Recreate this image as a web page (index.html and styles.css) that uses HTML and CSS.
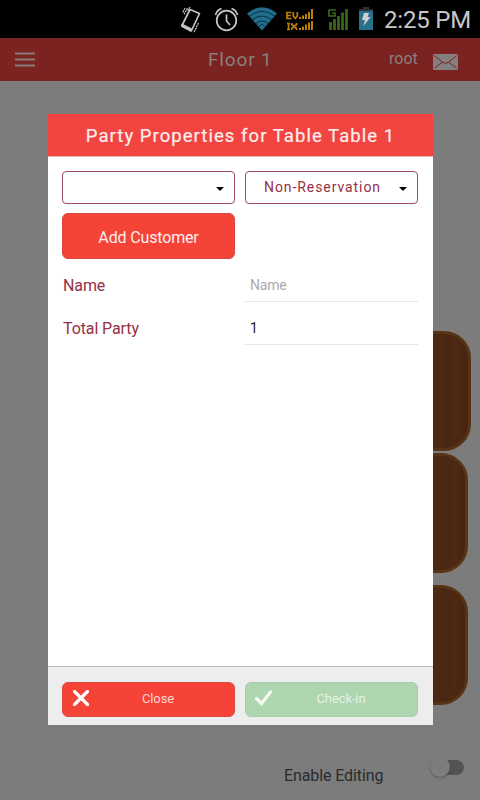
FILE: index.html
```html
<!DOCTYPE html>
<html lang="en">
<head>
<meta charset="utf-8">
<title>Floor 1</title>
<link rel="stylesheet" href="styles.css">
</head>
<body>
<div class="screen">
  <div class="status">
    <svg class="vibrate" width="22" height="26" viewBox="0 0 22 26" fill="none" stroke="#c4c4c4">
      <path d="M10 2.500 19.500 6.500 11.500 23.500 2 18.500Z" stroke-width="1.700" stroke-linejoin="round"/>
      <path d="M2 17 12 22 11 24.500 1.500 19.500Z" fill="#c4c4c4"/>
      <path d="M7.500 1 4 7.500M5 1 2.500 6M18.500 16 15 23M16.500 21 13.500 25.500M10 0 7.500 4" stroke-width="1.200" stroke-dasharray="2 .6"/>
    </svg>
    <svg class="alarm" width="25" height="25" viewBox="0 0 25 25" fill="none" stroke="#c8c8c8" stroke-width="1.700">
      <circle cx="12.500" cy="13.500" r="9.800"/>
      <path d="M12.500 7.500V14L16 18M1.500 8C2.500 4.500 4.500 2.500 7.500 1.500M23.500 8C22.500 4.500 20.500 2.500 17.500 1.500"/>
    </svg>
    <svg class="wifi" width="32" height="24" viewBox="0 0 32 24">
      <path d="M1 6.500Q16-6 31 6.500L16 23.500Z" fill="#216d8c"/>
      <path d="M3 9.500Q16-1 29 9.500M6 13Q16 5 26 13M9.500 17Q16 11 22.500 17" fill="none" stroke="#06202b" stroke-width=".8"/>
      <path d="M13.500 19.500 16 17 18.500 19.500" fill="none" stroke="#0a2b38"/>
    </svg>
    <svg class="signal" width="27" height="22" viewBox="0 0 27 22" fill="none" stroke="#bd8100" stroke-width="1.700">
      <path d="M5.500 3.500H1V9.500H5.500M1 6.500H5M7.300 3V7L9.300 9.500 11.300 7V3M2.500 14V21M1 14.500H4M1 20.500H4M5.800 14V15.500L10.500 19.500V21M10.500 14V15.500L5.800 19.500V21"/>
      <path d="M14 8V10M17 6.500V10M20 5V10M23 3V10M26 0V10M14 19V21M17 17.500V21M20 15.500V21M23 13.500V21M26 12V21" stroke-width="2"/>
    </svg>
    <svg class="network" width="21" height="21" viewBox="0 0 21 21" fill="none" stroke="#3b6818">
      <path d="M8 1H1V7H7V4H4" stroke-width="1.700"/>
      <path d="M2.500 13V21M6.500 10V21M10.500 7V21M14.500 3.500V21M18.500 0V21" stroke-width="2.700"/>
    </svg>
    <svg class="battery" width="14" height="23" viewBox="0 0 14 23">
      <path d="M4 0H10V2H14V4H0V2H4Z" fill="#303030"/>
      <path d="M0 4H14V23H0Z" fill="#29708d"/>
      <path d="M5 6H10L8.500 10H11.500L4.500 19 6 13H3Z" fill="#d0d0d0"/>
    </svg>
    <span class="clock">2:25 PM</span>
  </div>
  <header class="appbar">
    <svg class="menu" width="20" height="15" viewBox="0 0 20 15"><path d="M0 1.500H20M0 7.500H20M0 13.500H20" stroke="#8a7b7a" stroke-width="1.800"/></svg>
    <h1 class="title">Floor 1</h1>
    <span class="user">root</span>
    <svg class="mail" width="25" height="17" viewBox="0 0 25 17">
      <rect width="25" height="16" rx="1" fill="#858080"/>
      <path d="M1 1.500 10 8.500Q12.500 10 15 8.500L24 1.500M1.500 14 9 8.500M23.500 14 16 8.500" fill="none" stroke="#7b2321" stroke-width="1"/>
    </svg>
  </header>
  <main class="floor">
    <div class="table table-1"></div>
    <div class="table table-2"></div>
    <div class="table table-3"></div>
  </main>
  <div class="editing">
    <span>Enable Editing</span>
    <span class="toggle"><span class="knob"></span></span>
  </div>

  <section class="dialog">
    <h2 class="heading">Party Properties for Table Table 1</h2>
    <div class="form">
      <div class="select"><span></span><i class="arrow"></i></div>
      <div class="select"><span>Non-Reservation</span><i class="arrow"></i></div>
      <button class="add">Add Customer</button>
      <span></span>
      <label class="label">Name</label>
      <div class="field placeholder">Name</div>
      <label class="label">Total Party</label>
      <div class="field">1</div>
    </div>
    <footer class="actions">
      <button class="action close">
        <svg width="16" height="16" viewBox="0 0 16 16"><path d="M1.500 1.500 14.500 14.500M14.500 1.500 1.500 14.500" stroke="#fff" stroke-width="3.200" stroke-linecap="round"/></svg>
        <span>Close</span>
      </button>
      <button class="action checkin">
        <svg width="17" height="16" viewBox="0 0 17 16"><path d="M1.500 8.500 6.500 13.500 15.500 2" fill="none" stroke="#f5faf5" stroke-width="3.200" stroke-linecap="round"/></svg>
        <span>Check-in</span>
      </button>
    </footer>
  </section>
</div>
</body>
</html>
```
FILE: styles.css
```css
* { box-sizing: border-box; }
body { margin: 0; font-family: Roboto, "Liberation Sans", sans-serif; font-size: 16px; }
h1, h2 { margin: 0; font-weight: 400; }
button { border: 0; padding: 0; font: inherit; }
svg { display: block; flex: none; }

.screen {
  position: relative;
  display: flex;
  flex-direction: column;
  width: 480px;
  height: 800px;
  overflow: hidden;
  background: #7c7c7c;
}

.status {
  display: flex;
  align-items: flex-start;
  height: 38px;
  padding-left: 180px;
  background: #000;
}
.vibrate { margin-top: 7px; }
.alarm { margin: 7px 0 0 12px; }
.wifi { margin: 7px 0 0 7px; }
.signal { margin: 9px 0 0 8px; }
.network { margin: 9px 0 0 15px; }
.battery { margin: 7px 0 0 10px; }
.clock {
  margin-left: 11px;
  font-size: 24px;
  line-height: 40px;
  letter-spacing: -.2px;
  color: #c8c8c8;
  white-space: nowrap;
}

.appbar {
  display: flex;
  align-items: flex-start;
  height: 43px;
  padding-left: 15px;
  background: #7b2321;
  color: #8a7f7e;
}
.menu { margin-top: 14px; }
.title {
  width: 180px;
  margin-left: 173px;
  font-size: 19px;
  line-height: 43px;
  letter-spacing: .85px;
}
.user { width: 44px; margin-left: 1px; line-height: 41px; }
.mail { margin-top: 16px; }

.floor { position: relative; flex: 1; }
.table {
  position: absolute;
  width: 120px;
  height: 120px;
  border: 3px solid #573415;
  border-radius: 27px;
  background: linear-gradient(90deg, #4b2714 70%, #4e2915 76%, #492613 82%, #4e2914 90%, #482411);
  box-shadow: inset 0 0 0 1px #4a260f;
}
.table-1 { left: 351px; top: 250px; }
.table-2 { left: 348px; top: 372px; }
.table-3 { left: 348px; top: 504px; }

.editing {
  display: flex;
  align-items: flex-start;
  justify-content: space-between;
  height: 50px;
  padding: 0 16px 0 284px;
  line-height: 51px;
  letter-spacing: -.1px;
  color: #2b2b2b;
}
.toggle {
  width: 34px;
  height: 15px;
  margin-top: 10px;
  border-radius: 8px;
  background: #535353;
}
.knob {
  display: block;
  width: 20px;
  height: 20px;
  margin-top: -3px;
  border-radius: 50%;
  background: #7d7d7d;
  box-shadow: 0 1px 2px rgba(0, 0, 0, .3);
}

.dialog {
  position: absolute;
  left: 48px;
  top: 114px;
  display: flex;
  flex-direction: column;
  width: 385px;
  height: 611px;
  background: #fff;
}
.heading {
  height: 42px;
  background: #f24440;
  box-shadow: 0 1px 0 #e8b4b2;
  color: #fdeeee;
  font-size: 18.500px;
  line-height: 44px;
  letter-spacing: 1.05px;
  -webkit-text-stroke: .2px #fdeeee;
  text-align: center;
  white-space: nowrap;
}
.form {
  display: grid;
  grid-template-columns: 173px 173px;
  grid-template-rows: 33px 51px 43px 43px;
  column-gap: 10px;
  flex: 1;
  align-content: start;
  padding: 15px 14px;
}
.select {
  display: flex;
  align-items: center;
  height: 33px;
  padding: 0 10px 2px 18px;
  border: 1px solid #a04a5c;
  border-radius: 4px;
  color: #953146;
  font-size: 14px;
  letter-spacing: .92px;
}
.arrow {
  margin: 4px 0 0 auto;
  border: 4.500px solid transparent;
  border-top-color: #000;
  border-bottom: 0;
}
.add {
  height: 46px;
  margin-top: 9px;
  padding-top: 2px;
  border: 1px solid #d9453a;
  border-radius: 6px;
  background: #f54337;
  color: #fdeeee;
  letter-spacing: -.15px;
}
.label { padding: 9px 0 0 1px; line-height: 43px; letter-spacing: -.1px; color: #953146; }
.field {
  height: 34px;
  margin-top: 13px;
  padding-left: 5px;
  border-bottom: 1px solid #e6e6e6;
  font-size: 14px;
  line-height: 35px;
  color: #222;
}
.placeholder { color: #aaa; letter-spacing: -.2px; }

.actions {
  display: flex;
  gap: 10px;
  height: 59px;
  padding: 15px 14px;
  border-top: 1px solid #b9b9b9;
  background: #ededed;
}
.action {
  display: flex;
  align-items: center;
  width: 173px;
  height: 35px;
  padding: 0 10px 3px;
  border: 1px solid #dc4b40;
  border-radius: 6px;
  background: #f54337;
  color: #fcd5d2;
  font-size: 13px;
}
.action span { flex: 1; padding-left: 3px; letter-spacing: -.1px; }
.checkin { padding-left: 9px; border-color: #a3d0a8; background: #add5b0; color: #e6f3e7; }
```
